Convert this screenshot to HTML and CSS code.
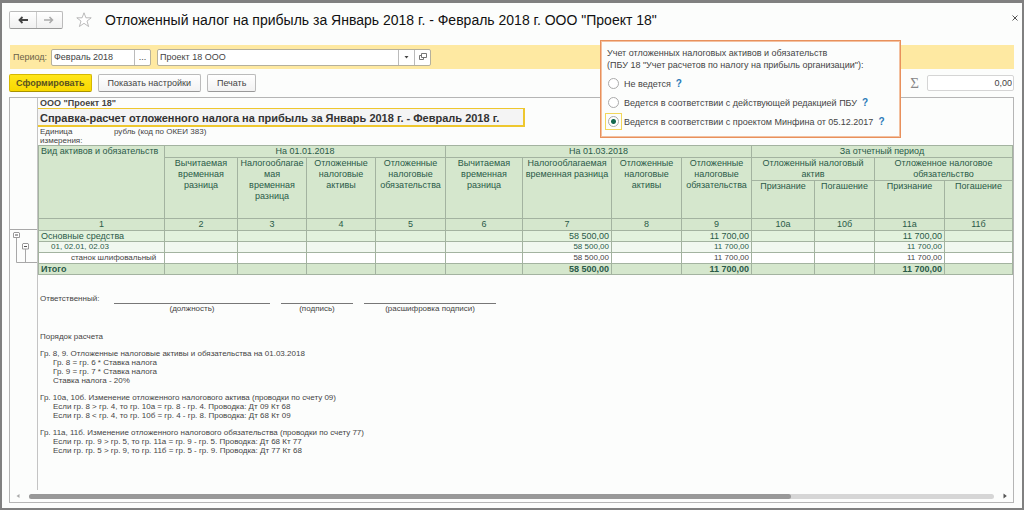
FILE: index.html
```html
<!DOCTYPE html>
<html lang="ru">
<head>
<meta charset="utf-8">
<title>Отложенный налог на прибыль</title>
<link rel="stylesheet" href="styles.css">
</head>
<body>
<main class="window">
  <header class="titlebar">
    <div class="nav">
      <button class="nav-btn" type="button" aria-label="Назад"><svg width="10" height="8" viewBox="0 0 10 8"><path d="M10 4H2M4.500 1L1.500 4l3 3" fill="none" stroke="#444" stroke-width="1.800"/></svg></button>
      <button class="nav-btn" type="button" aria-label="Вперед"><svg width="10" height="8" viewBox="0 0 10 8"><path d="M0 4h8M5.500 1l3 3-3 3" fill="none" stroke="#aaa" stroke-width="1.500"/></svg></button>
    </div>
    <button class="star" type="button" aria-label="В избранное"><svg width="16" height="16" viewBox="0 0 16 16"><path d="M8 .8l1.900 5h5.300l-4.200 3.300 1.600 5.400L8 11.300l-4.600 3.200L5 9.100.8 5.800h5.300z" fill="#fff" stroke="#aaa" stroke-width=".8"/></svg></button>
    <h1 class="title">Отложенный налог на прибыль за Январь 2018 г. - Февраль 2018 г. ООО "Проект 18"</h1>
    <button class="close" type="button" aria-label="Закрыть"><svg width="6" height="6" viewBox="0 0 6 6"><path d="M.5.5l5 5M5.500.5l-5 5" stroke="#555" fill="none"/></svg></button>
  </header>

  <div class="filter">
    <label class="filter-label" for="period">Период:</label>
    <div class="field field-period">
      <input class="field-input" id="period" type="text" value="Февраль 2018">
      <button class="field-btn" type="button" aria-label="Выбрать период">...</button>
    </div>
    <div class="field field-org">
      <input class="field-input" type="text" value="Проект 18 ООО" aria-label="Организация">
      <button class="field-btn" type="button" aria-label="Список"><svg width="5" height="3" viewBox="0 0 5 3"><path d="M.5 0h4l-2 2.500z" fill="#444"/></svg></button>
      <button class="field-btn" type="button" aria-label="Открыть"><svg width="8" height="8" viewBox="0 0 8 8"><path d="M2.500.5h5v4h-5zM2.500 2.500h-2v4h4v-2" fill="none" stroke="#666" stroke-width=".9"/></svg></button>
    </div>
  </div>

  <div class="toolbar">
    <button class="btn btn-primary" type="button">Сформировать</button>
    <button class="btn" type="button">Показать настройки</button>
    <button class="btn" type="button">Печать</button>
    <label class="sigma" for="sum">Σ</label>
    <input class="sum" id="sum" type="text" value="0,00" readonly>
  </div>

  <section class="sheet">
    <div class="gutter">
      <svg class="outline" width="27" height="35" viewBox="0 0 27 35">
        <path d="M0 .5h28M6.500 9v24.500H28M15.500 20v13.500" fill="none" stroke="#a8a8a8"/>
        <path d="M4 3.500h5l.5.500v4.500h-6V4zM13 14.500h5l.5.500v5h-6v-5z" fill="#fff" stroke="#999"/>
        <path d="M5 6h3M14 17.500h3" stroke="#555"/>
      </svg>
    </div>
    <div class="paper">
      <p class="org">ООО "Проект 18"</p>
      <h2 class="caption">Справка-расчет отложенного налога на прибыль за Январь 2018 г. - Февраль 2018 г.</h2>
      <div class="unit"><span class="unit-name">Единица измерения:</span><span>рубль (код по ОКЕИ 383)</span></div>
      <table class="report">
        <colgroup><col class="c126"><col class="c73"><col class="c69"><col class="c69"><col class="c70"><col class="c77"><col class="c89"><col class="c70"><col class="c70"><col class="c63"><col class="c60"><col class="c70"><col></colgroup>
        <thead>
          <tr class="r-group"><th class="left" rowspan="3">Вид активов и обязательств</th><th colspan="4">На 01.01.2018</th><th colspan="4">На 01.03.2018</th><th colspan="4">За отчетный период</th></tr>
          <tr class="r-sub"><th rowspan="2">Вычитаемая временная разница</th><th rowspan="2">Налогооблагае<br>мая<br>временная разница</th><th rowspan="2">Отложенные налоговые активы</th><th rowspan="2">Отложенные налоговые обязательства</th><th rowspan="2">Вычитаемая временная разница</th><th rowspan="2">Налогооблагаемая временная разница</th><th rowspan="2">Отложенные налоговые активы</th><th rowspan="2">Отложенные налоговые обязательства</th><th colspan="2">Отложенный налоговый<br>актив</th><th colspan="2">Отложенное налоговое<br>обязательство</th></tr>
          <tr class="r-kind"><th>Признание</th><th>Погашение</th><th>Признание</th><th>Погашение</th></tr>
          <tr class="r-num"><th>1</th><th>2</th><th>3</th><th>4</th><th>5</th><th>6</th><th>7</th><th>8</th><th>9</th><th>10а</th><th>10б</th><th>11а</th><th>11б</th></tr>
        </thead>
        <tbody>
          <tr class="lvl1"><td>Основные средства</td><td></td><td></td><td></td><td></td><td></td><td>58 500,00</td><td></td><td>11 700,00</td><td></td><td></td><td>11 700,00</td><td></td></tr>
          <tr class="lvl2"><td>01, 02.01, 02.03</td><td></td><td></td><td></td><td></td><td></td><td>58 500,00</td><td></td><td>11 700,00</td><td></td><td></td><td>11 700,00</td><td></td></tr>
          <tr class="lvl3"><td>станок шлифовальный</td><td></td><td></td><td></td><td></td><td></td><td>58 500,00</td><td></td><td>11 700,00</td><td></td><td></td><td>11 700,00</td><td></td></tr>
          <tr class="total"><td>Итого</td><td></td><td></td><td></td><td></td><td></td><td>58 500,00</td><td></td><td>11 700,00</td><td></td><td></td><td>11 700,00</td><td></td></tr>
        </tbody>
      </table>
      <div class="sign">
        <span class="sign-who">Ответственный:</span>
        <span class="sign-line sign-post">(должность)</span>
        <span class="sign-line sign-hand">(подпись)</span>
        <span class="sign-line sign-name">(расшифровка подписи)</span>
      </div>
      <div class="notes">
        <p>Порядок расчета</p>
        <div><p>Гр. 8, 9. Отложенные налоговые активы и обязательства на 01.03.2018</p>
          <p class="in">Гр. 8 = гр. 6 * Ставка налога</p><p class="in">Гр. 9 = гр. 7 * Ставка налога</p><p class="in">Ставка налога - 20%</p></div>
        <div><p>Гр. 10а, 10б. Изменение отложенного налогового актива (проводки по счету 09)</p>
          <p class="in">Если гр. 8 &gt; гр. 4, то гр. 10а = гр. 8 - гр. 4. Проводка: Дт 09 Кт 68</p><p class="in">Если гр. 8 &lt; гр. 4, то гр. 10б = гр. 4 - гр. 8. Проводка: Дт 68 Кт 09</p></div>
        <div><p>Гр. 11а, 11б. Изменение отложенного налогового обязательства (проводки по счету 77)</p>
          <p class="in">Если гр. гр. 9 &gt; гр. 5, то гр. 11а = гр. 9 - гр. 5. Проводка: Дт 68 Кт 77</p><p class="in">Если гр. гр. 5 &gt; гр. 9, то гр. 11б = гр. 5 - гр. 9. Проводка: Дт 77 Кт 68</p></div>
      </div>
    </div>
    <div class="scroll">
      <svg width="4" height="6" viewBox="0 0 4 6"><path d="M3.500 1v4L.5 3z" fill="#aaa"/></svg>
      <div class="track"><div class="thumb"></div></div>
      <svg width="4" height="6" viewBox="0 0 4 6"><path d="M.5.500v5L3.800 3z" fill="#555"/></svg>
    </div>
  </section>

  <fieldset class="popup">
    <p class="popup-head">Учет отложенных налоговых активов и обязательств<br>(ПБУ 18 "Учет расчетов по налогу на прибыль организации"):</p>
    <div class="option"><span class="mark"><input class="radio" type="radio" name="pbu" id="o1"></span><label for="o1">Не ведется</label><a class="help" href="#">?</a></div>
    <div class="option"><span class="mark"><input class="radio" type="radio" name="pbu" id="o2"></span><label for="o2">Ведется в соответствии с действующей редакцией ПБУ</label><a class="help" href="#">?</a></div>
    <div class="option"><span class="mark mark-on"><input class="radio" type="radio" name="pbu" id="o3" checked></span><label for="o3">Ведется в соответствии с проектом Минфина от 05.12.2017</label><a class="help" href="#">?</a></div>
  </fieldset>
</main>
</body>
</html>
```
FILE: styles.css
```css
* { box-sizing: border-box; }
body { margin: 0; font: 9px/12px "Liberation Sans", Arial, sans-serif; color: #444; background: #fcfdfc; }
h1, h2, p { margin: 0; }
button, input { font: inherit; color: inherit; margin: 0; }
button { display: flex; align-items: center; justify-content: center; padding: 0; border: 0; background: none; }

.window { position: relative; display: flex; flex-direction: column; min-height: 100vh; padding: 8px 4px 5px 7px; border: 2px solid #808080; border-top-width: 3px; }

.titlebar { display: flex; align-items: center; height: 18px; }
.nav { display: flex; height: 18px; width: 54px; border: 1px solid #bbb; border-bottom-color: #999; border-radius: 2px; background: linear-gradient(#fff, #f0f0f0); }
.nav-btn { flex: 1; }
.nav-btn + .nav-btn { border-left: 1px solid #ccc; }
.star { margin: 0 13px; }
.title { flex: 1; font-size: 14px; line-height: 18px; font-weight: 400; color: #111; white-space: nowrap; }
.close { align-self: flex-start; margin: 4px 0 0; }

.filter { display: flex; align-items: center; gap: 6px; height: 24px; margin: 16px 4px 0 1px; padding: 0 3px; background: #fee9a2; }
.filter-label { width: 32px; color: #6b6248; white-space: nowrap; }
.field { display: flex; height: 17px; border: 1px solid #b5b09c; border-radius: 2px; background: #fff; }
.field-period { width: 100px; }
.field-org { width: 274px; }
.field-input { flex: 1; min-width: 0; padding: 0 2px; border: 0; background: none; outline: 0; }
.field-btn { width: 16px; border-left: 1px solid #bbb; }

.toolbar { display: flex; align-items: center; gap: 6px; height: 18px; margin: 5px 4px 5px 0; }
.btn { height: 18px; padding: 0 9px; border: 1px solid #bbb; border-bottom-color: #999; border-radius: 2px; background: linear-gradient(#fff, #f2f2f2); white-space: nowrap; }
.btn-primary { padding: 0 6px; border-color: #d5b800; border-bottom-color: #a89200; background: linear-gradient(#ffe61a, #f8d800); font-weight: 700; color: #5a5220; }
.sigma { margin-left: auto; margin-right: 2px; font: 15px/18px "Liberation Serif", serif; color: #888; }
.sum { width: 87px; height: 16px; padding: 0 1px; border: 1px solid #d5d5d5; border-radius: 2px; background: #fff; text-align: right; }

.sheet { flex: 1; display: grid; grid-template-columns: 28px 1fr; grid-template-rows: 1fr auto; margin-right: 4px; border: 1px solid #b5b5b5; }
.gutter { padding-top: 131px; border-right: 1px solid #c4c4c4; }
.outline { display: block; }
.paper { min-width: 0; }
.org { padding: 0 2px; line-height: 10px; font-weight: 700; }
.caption { width: 487px; height: 19px; padding-left: 2px; border: 2px solid #eec72e; border-width: 1px 2px 2px 0; background: #f4f4f4; font-size: 11px; line-height: 18px; color: #333; white-space: nowrap; }
.unit { display: flex; height: 18px; padding-left: 2px; font-size: 8px; line-height: 9px; }
.unit-name { width: 74px; padding-right: 24px; }

.report { width: 100%; table-layout: fixed; border-collapse: collapse; line-height: 11px; color: #2a5a48; }
.c126 { width: 126px; } .c89 { width: 89px; } .c77 { width: 77px; } .c73 { width: 73px; } .c70 { width: 70px; } .c69 { width: 69px; } .c63 { width: 63px; } .c60 { width: 60px; }
.report th, .report td { padding: 0; border: 1px solid #a3b3a0; }
.report th { background: #d5e7cd; font-weight: 400; vertical-align: top; }
.report th.left { padding-left: 2px; text-align: left; white-space: nowrap; }
.report td { height: 11px; padding: 0 2px; line-height: 10px; text-align: right; white-space: nowrap; }
.report td:first-child { text-align: left; }
.r-group { height: 12px; }
.r-sub { height: 22px; }
.r-kind { height: 38px; }
.r-num { height: 12px; }
.lvl1 { background: #e2f2dd; }
.lvl2 { background: #f1f8f0; font-size: 8px; }
.lvl3 { background: #fff; font-size: 8px; color: #444; }
.report .lvl2 td:first-child { padding-left: 12px; }
.report .lvl3 td:first-child { padding-left: 32px; }
.total { background: #d5e7cd; font-weight: 700; }

.sign { display: flex; gap: 11px; margin-top: 19px; padding-left: 2px; font-size: 8px; line-height: 9px; }
.sign-who { width: 63px; white-space: nowrap; }
.sign-line { height: 19px; margin-top: 9px; border-top: 1px solid #777; text-align: center; white-space: nowrap; }
.sign-post { width: 156px; }
.sign-hand { width: 72px; }
.sign-name { width: 132px; }
.notes { display: flex; flex-direction: column; gap: 8px; margin-top: 10px; padding-left: 2px; font-size: 8px; line-height: 9px; }
.in { padding-left: 13px; }

.scroll { grid-column: 1 / -1; display: flex; align-items: center; gap: 9px; height: 12px; padding: 0 6px; }
.track { flex: 1; height: 5px; border-radius: 3px; background: #d6d6d6; }
.thumb { width: 79%; height: 5px; border-radius: 3px; background: #999; }

.popup { position: absolute; top: 37px; right: 121px; width: 301px; margin: 0; padding: 6px; border: 1px solid #e8905c; outline: 1px solid #f3c1a0; outline-offset: -2px; background: #fcfdfc; white-space: nowrap; }
.popup-head { margin-bottom: 3px; }
.option { display: flex; align-items: center; height: 19px; }
.mark { display: grid; place-items: center; width: 17px; height: 17px; margin: 0 2px 0 -2px; border: 1px solid transparent; }
.mark-on { border-color: #f2d75c; }
.radio { appearance: none; width: 11px; height: 11px; border: 1px solid #aaa; border-radius: 50%; background: #fff; }
.radio:checked { background: radial-gradient(circle, #14684f 0 2px, #fff 3px); }
.help { margin-left: 5px; color: #2a7ab8; font-size: 10px; font-weight: 700; text-decoration: none; }
```
